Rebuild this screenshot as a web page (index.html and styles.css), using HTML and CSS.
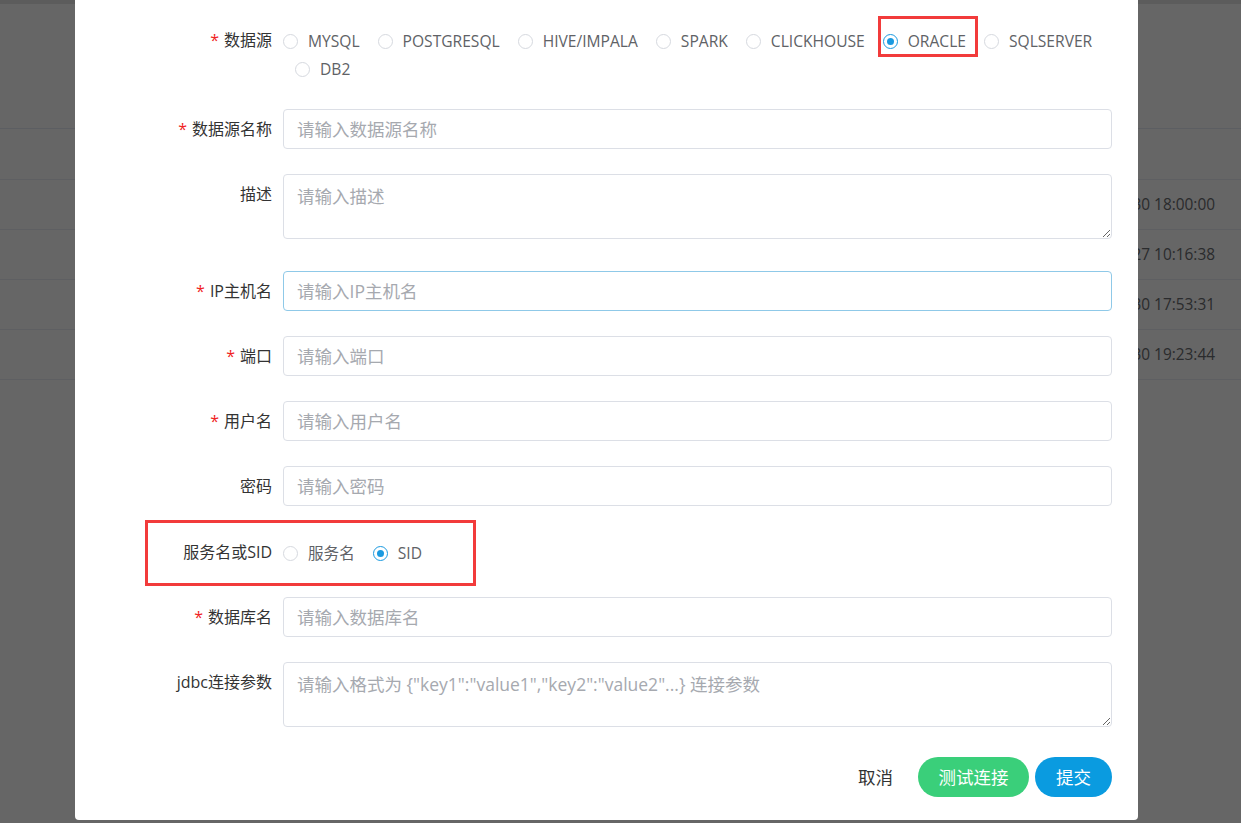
FILE: index.html
```html
<!DOCTYPE html>
<html lang="zh-CN">
<head>
<meta charset="utf-8">
<title>新增数据源</title>
<link rel="stylesheet" href="styles.css">
</head>
<body>
<div class="page">
  <div class="page-top"></div>
  <div class="page-toolbar"></div>
  <div class="page-thead"></div>
  <div class="page-row"><span class="cell-time">2021-04-30 18:00:00</span></div>
  <div class="page-row"><span class="cell-time">2021-04-27 10:16:38</span></div>
  <div class="page-row"><span class="cell-time">2021-04-30 17:53:31</span></div>
  <div class="page-row"><span class="cell-time">2021-04-30 19:23:44</span></div>
</div>
<div class="overlay"></div>
<div class="dialog">
  <form class="form">
    <div class="item item-radios">
      <label class="label"><span class="req">*</span>数据源</label>
      <div class="radio-group">
        <span class="radio"><span class="radio-dot"></span><span class="radio-text">MYSQL</span></span>
        <span class="radio"><span class="radio-dot"></span><span class="radio-text">POSTGRESQL</span></span>
        <span class="radio"><span class="radio-dot"></span><span class="radio-text">HIVE/IMPALA</span></span>
        <span class="radio"><span class="radio-dot"></span><span class="radio-text">SPARK</span></span>
        <span class="radio"><span class="radio-dot"></span><span class="radio-text">CLICKHOUSE</span></span>
        <span class="radio is-checked"><span class="radio-dot"></span><span class="radio-text">ORACLE</span></span>
        <span class="radio"><span class="radio-dot"></span><span class="radio-text">SQLSERVER</span></span>
        <span class="break"></span>
        <span class="radio"><span class="radio-dot"></span><span class="radio-text">DB2</span></span>
      </div>
    </div>
    <div class="item">
      <label class="label"><span class="req">*</span>数据源名称</label>
      <input class="input" type="text" placeholder="请输入数据源名称">
    </div>
    <div class="item item-textarea">
      <label class="label">描述</label>
      <textarea class="textarea" placeholder="请输入描述"></textarea>
    </div>
    <div class="item">
      <label class="label"><span class="req">*</span>IP主机名</label>
      <input class="input is-focus" type="text" placeholder="请输入IP主机名">
    </div>
    <div class="item">
      <label class="label"><span class="req">*</span>端口</label>
      <input class="input" type="text" placeholder="请输入端口">
    </div>
    <div class="item">
      <label class="label"><span class="req">*</span>用户名</label>
      <input class="input" type="text" placeholder="请输入用户名">
    </div>
    <div class="item">
      <label class="label">密码</label>
      <input class="input" type="text" placeholder="请输入密码">
    </div>
    <div class="item item-sid">
      <label class="label">服务名或SID</label>
      <div class="radio-group radio-inline">
        <span class="radio"><span class="radio-dot"></span><span class="radio-text">服务名</span></span>
        <span class="radio is-checked"><span class="radio-dot"></span><span class="radio-text">SID</span></span>
      </div>
    </div>
    <div class="item">
      <label class="label"><span class="req">*</span>数据库名</label>
      <input class="input" type="text" placeholder="请输入数据库名">
    </div>
    <div class="item item-last">
      <label class="label">jdbc连接参数</label>
      <textarea class="textarea" placeholder='请输入格式为 {"key1":"value1","key2":"value2"...} 连接参数'></textarea>
    </div>
  </form>
  <div class="footer">
    <button class="btn btn-text" type="button">取消</button>
    <button class="btn btn-green" type="button">测试连接</button>
    <button class="btn btn-blue" type="button">提交</button>
  </div>
  <div class="mark mark-oracle"></div>
  <div class="mark mark-sid"></div>
</div>
</body>
</html>
```
FILE: styles.css
```css
html, body {
  margin: 0;
  padding: 0;
}
body {
  width: 1241px;
  height: 823px;
  overflow: hidden;
  background: #ffffff;
  font-family: "Open Sans", "Noto Sans CJK SC", sans-serif;
  color: #333;
}
.page {
  width: 100%;
}
.page-top {
  height: 4px;
  background: #e6e6e6;
}
.page-toolbar {
  height: 124px;
  border-bottom: 1px solid #e6ebf5;
}
.page-thead {
  height: 50px;
  border-bottom: 1px solid #ebeef5;
}
.page-row {
  height: 49px;
  border-bottom: 1px solid #ebeef5;
  display: flex;
  align-items: center;
  justify-content: flex-end;
  padding-right: 26px;
}
.cell-time {
  font-size: 15.4px;
  color: #6a6c70;
}
.overlay {
  position: fixed;
  inset: 0;
  background: rgba(0, 0, 0, 0.6);
}
.dialog {
  position: fixed;
  left: 75px;
  top: 0;
  width: 1063px;
  height: 820px;
  box-sizing: border-box;
  background: #fff;
  border-radius: 0 0 4px 4px;
  padding: 20px 26px 24px 28px;
  display: flex;
  flex-direction: column;
}
.form {
  display: flex;
  flex-direction: column;
}
.item {
  display: grid;
  grid-template-columns: 180px 1fr;
  margin-bottom: 25px;
}
.item-textarea {
  margin-bottom: 32px;
}
.item-last {
  margin-bottom: 0;
}
.label {
  box-sizing: border-box;
  padding-right: 11px;
  text-align: right;
  font-size: 16px;
  line-height: 40px;
  color: #333;
  white-space: nowrap;
}
.item-sid .label {
  padding-top: 1px;
}
.req {
  color: #f01e1e;
  margin-right: 5px;
}
.input {
  box-sizing: border-box;
  height: 40px;
  width: 100%;
  margin: 0;
  border: 1px solid #dcdfe6;
  border-radius: 4px;
  padding: 0 13px;
  font-family: "Open Sans", "Noto Sans CJK SC", sans-serif;
  font-size: 17.5px;
  color: #606266;
  outline: none;
  background: #fff;
}
.input.is-focus {
  border-color: #8fc9e8;
}
.input::placeholder, .textarea::placeholder {
  color: #a6a9af;
}
.textarea {
  box-sizing: border-box;
  display: block;
  height: 65px;
  width: 100%;
  margin: 0;
  border: 1px solid #dcdfe6;
  border-radius: 4px;
  padding: 8px 13px;
  font-family: "Open Sans", "Noto Sans CJK SC", sans-serif;
  font-size: 17.5px;
  line-height: 26px;
  color: #606266;
  outline: none;
  resize: vertical;
  background: #fff;
}
.radio-group {
  display: flex;
  flex-wrap: wrap;
  align-items: center;
  padding: 7px 0 1px 0;
  line-height: 28px;
}
.radio-inline {
  padding: 8px 0 5px 0;
}
.break {
  flex-basis: 100%;
  height: 0;
}
.radio {
  display: inline-flex;
  align-items: center;
  margin-left: 12px;
  margin-right: 6px;
  height: 28px;
  white-space: nowrap;
}
.radio:first-child {
  margin-left: 0;
}
.radio-dot {
  box-sizing: border-box;
  width: 15px;
  height: 15px;
  border: 1px solid #d6d9df;
  border-radius: 50%;
  margin-right: 10px;
  display: flex;
  align-items: center;
  justify-content: center;
  background: #fff;
}
.radio.is-checked .radio-dot {
  border-color: #1b9ae0;
}
.radio.is-checked .radio-dot::after {
  content: "";
  width: 7px;
  height: 7px;
  border-radius: 50%;
  background: #1b9ae0;
}
.radio-text {
  font-size: 15.6px;
  color: #606266;
}
.footer {
  margin-top: 30px;
  display: flex;
  justify-content: flex-end;
  align-items: center;
  gap: 6px;
}
.btn {
  height: 40px;
  border: none;
  border-radius: 20px;
  font-family: "Open Sans", "Noto Sans CJK SC", sans-serif;
  font-size: 17.5px;
  line-height: 40px;
  cursor: pointer;
  padding: 0 21px;
  color: #fff;
}
.btn-text {
  background: transparent;
  color: #333;
  padding: 0 19px;
}
.btn-green {
  background: #3acf7a;
  width: 111px;
  padding: 0;
}
.btn-blue {
  background: #0a9be0;
  width: 77px;
  padding: 0;
}
.mark {
  position: absolute;
  box-sizing: border-box;
  border: 3px solid #f23b3b;
}
.mark-oracle {
  left: 803px;
  top: 16px;
  width: 100px;
  height: 41px;
}
.mark-sid {
  left: 70px;
  top: 520px;
  width: 331px;
  height: 66px;
}
```
